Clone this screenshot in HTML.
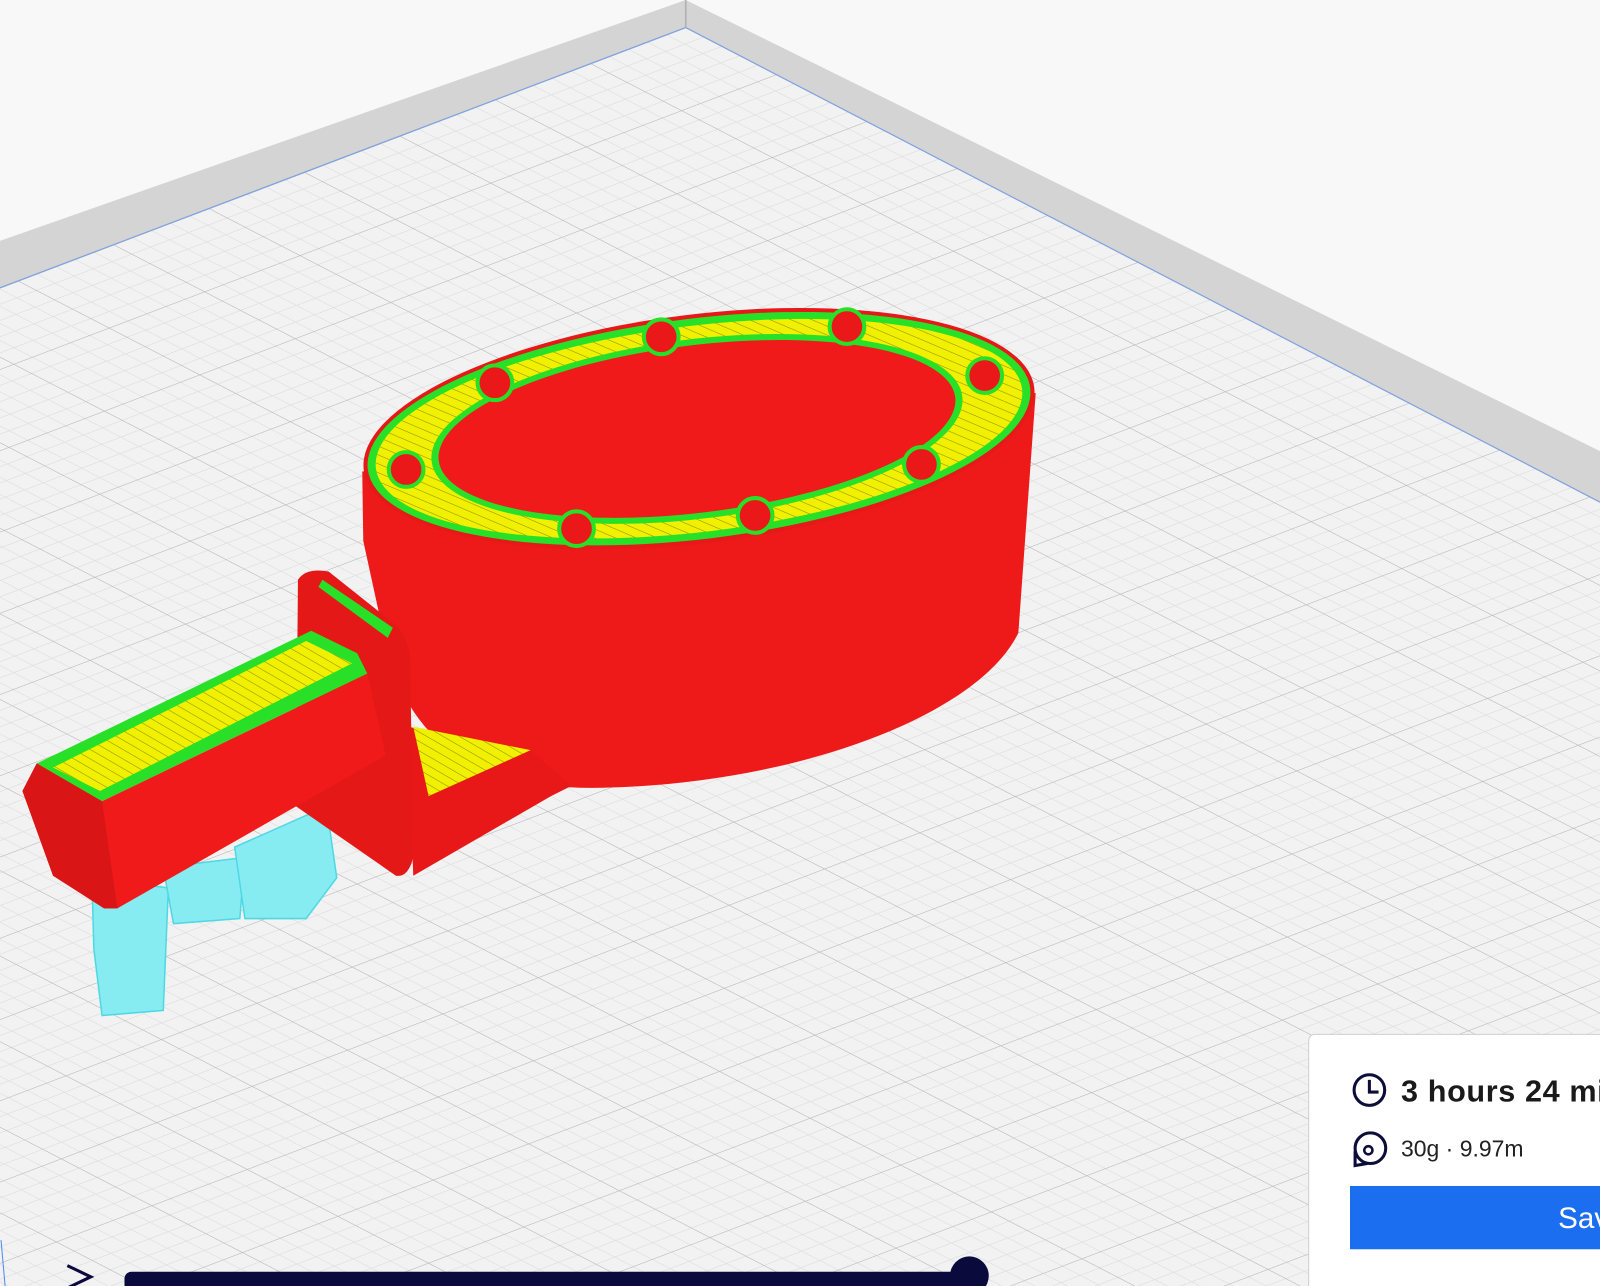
<!DOCTYPE html>
<html><head><meta charset="utf-8"><style>
html,body{margin:0;padding:0;width:1600px;height:1286px;overflow:hidden;background:#f8f8f8}
svg{display:block}
</style></head><body>
<svg width="1600" height="1286" viewBox="0 0 1568 1260" preserveAspectRatio="none" xmlns="http://www.w3.org/2000/svg" font-family="Liberation Sans, sans-serif">
<defs>
<pattern id="grid" width="100" height="100" patternUnits="userSpaceOnUse" patternTransform="matrix(0.935,-0.355,0.888,0.459,672,27)">
<rect width="100" height="100" fill="#f2f2f2"/>
<g stroke="#e0e0e0" stroke-width="0.9">
<path d="M0 20H100M0 40H100M0 60H100M0 80H100M20 0V100M40 0V100M60 0V100M80 0V100"/>
</g>
<path d="M0 0H100M0 0V100" stroke="#b6b6b6" stroke-width="1.5"/>
</pattern>
<pattern id="hatch" width="8" height="8" patternUnits="userSpaceOnUse" patternTransform="rotate(-60)">
<rect width="8" height="8" fill="#f0f000"/>
<path d="M0 0V8" stroke="#8a8a00" stroke-width="1"/>
</pattern>
</defs>
<rect width="1568" height="1260" fill="#f8f8f8"/>
<polygon points="0,236 672,0 1568,442 1568,492 672,27 0,282" fill="#d4d4d4"/>
<polygon points="0,282 672,27 1568,492 1568,1260 0,1260" fill="url(#grid)"/>
<polyline points="0,282 672,27 1568,492" fill="none" stroke="#7ea2e0" stroke-width="1.2"/>
<line x1="672" y1="0" x2="672" y2="27" stroke="#b0b0b0" stroke-width="1.5"/>
<line x1="1" y1="1215" x2="5" y2="1260" stroke="#4a8cf0" stroke-width="1"/>

<!-- supports -->
<g fill="#86ecf2" stroke="#4fd8e4" stroke-width="1.5">
<path d="M90,860 L165,870 L160,990 L100,995 L92,930 Z"/>
<path d="M160,850 L240,840 L235,900 L170,905 Z"/>
<path d="M230,830 L320,790 L330,860 L300,900 L240,900 Z"/>
</g>

<!-- body -->
<path d="M355,462 L1015,385 L998,620 C960,700 780,770 580,772 C470,772 405,730 380,640 L356,530 Z" fill="#ee1a1a"/>
<g transform="rotate(-7 685 420)">
<ellipse cx="685" cy="420" rx="331" ry="112" fill="#e61818"/>
<ellipse cx="685" cy="420" rx="327" ry="108" fill="#28e028"/>
<ellipse cx="685" cy="420" rx="319" ry="101" fill="url(#hatch)"/>
<ellipse cx="683" cy="420" rx="262" ry="88" fill="#28e028"/>
<ellipse cx="683" cy="420" rx="255" ry="82" fill="#f01a1a"/>
</g>
<g stroke="#28e028" stroke-width="4" fill="#ea1818">
<circle cx="648" cy="330" r="17"/><circle cx="830" cy="320" r="17"/><circle cx="965" cy="368" r="17"/>
<circle cx="903" cy="455" r="17"/><circle cx="740" cy="505" r="17"/><circle cx="565" cy="518" r="17"/>
<circle cx="398" cy="460" r="17"/><circle cx="485" cy="375" r="17"/>
</g>

<!-- bridge under flange -->
<polygon points="400,712 520,735 560,770 540,780 405,858" fill="#e81818"/>
<polygon points="405,712 520,735 420,780" fill="url(#hatch)"/>
<!-- flange -->
<path d="M292,568 Q300,556 322,560 L385,610 Q402,625 402,650 L405,840 Q400,860 388,858 L290,790 Z" fill="#e51818"/>
<polygon points="316,568 385,615 380,625 312,575" fill="#28e028"/>
<!-- arm -->
<polygon points="36,748 305,618 350,640 360,660 100,785" fill="#28e028"/>
<polygon points="52,752 300,628 345,650 98,775" fill="url(#hatch)"/>
<polygon points="22,775 36,748 100,785 360,660 378,740 115,890 102,890 52,858" fill="#f01a1a"/>
<polygon points="22,775 36,748 100,785 115,890 102,890 52,858" fill="#d91515"/>

<!-- slider -->
<path d="M66,1240 L89,1251 L66,1262" fill="none" stroke="#0a0a3c" stroke-width="3"/>
<rect x="122" y="1246" width="830" height="20" rx="7" fill="#0a0a3c"/>
<circle cx="950" cy="1250" r="19" fill="#0a0a3c"/>

<!-- panel -->
<rect x="1282.5" y="1013.5" width="400" height="300" rx="6" fill="#fff" stroke="#cfcfcf"/>
<circle cx="1342" cy="1068" r="15" fill="none" stroke="#0d0d3a" stroke-width="3"/>
<path d="M1342,1058 V1070 H1351" fill="none" stroke="#0d0d3a" stroke-width="3"/>
<text x="1373" y="1079" font-size="30" font-weight="bold" fill="#1a1a1a" letter-spacing="0.6">3 hours 24 minutes</text>
<circle cx="1343" cy="1125" r="15" fill="none" stroke="#0d0d3a" stroke-width="3"/>
<circle cx="1341" cy="1127" r="4" fill="none" stroke="#0d0d3a" stroke-width="2.5"/>
<path d="M1328,1128 L1328,1142 L1340,1140" fill="none" stroke="#0d0d3a" stroke-width="3"/>
<text x="1373" y="1133" font-size="22.5" fill="#222">30g · 9.97m</text>
<rect x="1323" y="1162" width="300" height="62" fill="#1b6ef0"/>
<text x="1527" y="1203" font-size="29" fill="#fff">Save to Disk</text>
</svg>
</body></html>
